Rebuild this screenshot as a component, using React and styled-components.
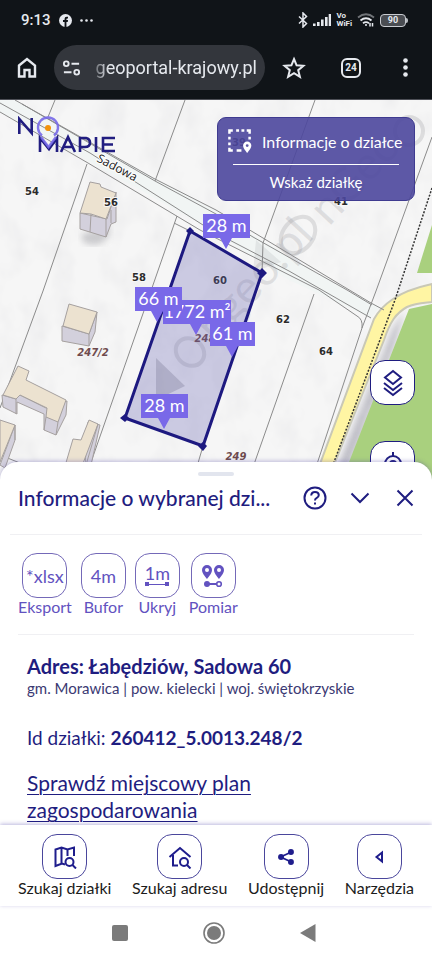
import React from 'react';
import styled, { createGlobalStyle } from 'styled-components';

const navy = '#1f1d80';
const violet = '#6252c0';

const GlobalStyle = createGlobalStyle`
  *, *::before, *::after { box-sizing: border-box; }
  body { margin: 0; background: #fff; font-family: Lato, "Open Sans", sans-serif; }
  button { font: inherit; color: inherit; background: none; border: 0; padding: 0; cursor: pointer; }
  svg { display: block; }
`;

const Page = styled.div`
  min-height: 100vh;
  display: flex;
  flex-direction: column;
  background: #fff;
`;

/* ---------- phone and browser bars ---------- */

const TopBars = styled.header`
  background: #101418;
  color: #e6e9ee;
  font-family: Roboto, sans-serif;
  border-bottom: 1px solid #4d4f56;
`;
const StatusBar = styled.div`
  display: flex;
  align-items: center;
  justify-content: space-between;
  height: 40px;
  padding: 0 24px 0 21px;
`;
const StatusGroup = styled.div`
  display: flex;
  align-items: center;
  gap: ${(p) => p.$gap}px;
`;
const Clock = styled.time`
  font-size: 15px;
  font-weight: 500;
`;
const VoWifi = styled.span`
  display: flex;
  flex-direction: column;
  font-size: 8px;
  line-height: 8px;
  font-weight: 700;
`;
const Battery = styled.span`
  display: flex;
  align-items: center;
  &::after {
    content: '';
    width: 2px;
    height: 5px;
    background: #b8bbc0;
    border-radius: 0 2px 2px 0;
  }
`;
const BatteryCell = styled.span`
  width: 26px;
  height: 13px;
  border: 1px solid #c9ccd1;
  border-radius: 4px;
  background: #4a4d52;
  font-size: 9px;
  line-height: 11px;
  font-weight: 700;
  text-align: center;
`;
const BrowserBar = styled.div`
  display: flex;
  align-items: center;
  height: 59px;
  padding: 0 8px 4px 16px;
`;
const BarButton = styled.button`
  display: grid;
  place-items: center;
  width: ${(p) => p.$width}px;
  height: 44px;
  flex: none;
`;
const AddressPill = styled.button`
  display: flex;
  align-items: center;
  flex: 1;
  min-width: 0;
  height: 45px;
  margin: 0 8px 0 16px;
  padding: 0 8px;
  border-radius: 23px;
  background: #33363c;
  gap: 8px;
`;
const Url = styled.span`
  flex: 1;
  min-width: 0;
  white-space: nowrap;
  text-align: right;
  font-size: 18px;
  line-height: 28px;
  mask-image: linear-gradient(90deg, transparent, #000 20px);
`;
const TabCount = styled.span`
  display: grid;
  place-items: center;
  width: 20px;
  height: 20px;
  border: 2px solid #e6e9ee;
  border-radius: 6px;
  font-size: 10px;
  font-weight: 700;
`;

/* ---------- map ---------- */

const MapArea = styled.main`
  position: relative;
  flex: 1 0 300px;
  overflow: hidden;
  background: #f4f4f4;
`;
const MapCanvas = styled.svg`
  position: absolute;
  inset: 0;
  width: 100%;
  height: 100%;
`;
const Logo = styled.a`
  position: absolute;
  left: 17px;
  top: 16px;
`;
const InfoPanel = styled.section`
  position: absolute;
  top: 17px;
  right: 17px;
  width: 198px;
  padding: 11px 15px 8px;
  border: 1px solid #3f3b90;
  border-radius: 9px;
  background: rgba(77, 71, 157, 0.9);
  color: #fff;
  font-size: 15px;
`;
const PanelTitle = styled.div`
  display: flex;
  align-items: center;
  gap: 10px;
  height: 24px;
  margin: 0 -7px 11px -5px;
  white-space: nowrap;
  font-size: 16px;
`;
const PanelAction = styled.button`
  display: block;
  width: 100%;
  padding-top: 8px;
  border-top: 1px solid #fff;
  line-height: 19px;
`;
const MapTools = styled.div`
  position: absolute;
  top: 260px;
  right: 17px;
  display: flex;
  flex-direction: column;
  gap: 36px;
`;

const Tile = styled.span`
  display: grid;
  place-items: center;
  width: 45px;
  height: 45px;
  border: 1px solid ${(p) => p.$line};
  border-radius: 15px;
  background: #fff;
  font-size: 18px;
`;
const NavTile = styled(Tile).attrs({ $line: '#4a469c' })`
  color: #1f1d8c;
`;
const TileButton = styled.button`
  display: flex;
  flex-direction: column;
  align-items: center;
  color: ${(p) => p.$color};
  font-size: 16px;
  line-height: 18px;
  white-space: nowrap;
`;

/* ---------- sheet ---------- */

const Sheet = styled.section`
  position: relative;
  margin-top: -18px;
  padding-top: 10px;
  border-radius: 18px 18px 0 0;
  background: #fff;
  box-shadow: 0 -1px 4px rgba(80, 70, 160, 0.35);
  color: ${navy};
`;
const Handle = styled.div`
  width: 36px;
  height: 4px;
  margin: 0 auto;
  border-radius: 2px;
  background: #e2e5ee;
`;
const SheetHeader = styled.div`
  display: flex;
  align-items: center;
  margin: 0 10px;
  padding: 0 0 14px 8px;
  border-bottom: 1px solid #f0f0f3;
`;
const SheetTitle = styled.h1`
  flex: 1;
  min-width: 0;
  overflow: hidden;
  margin: 0;
  white-space: nowrap;
  font-size: 21px;
  line-height: 44px;
  font-weight: 500;
`;
const HeaderButton = styled.button`
  display: grid;
  place-items: center;
  flex: none;
  width: 45px;
  height: 44px;
  &:last-child { margin-right: -5px; }
`;
const Actions = styled.div`
  display: flex;
  gap: 9px;
  margin: 0 18px;
  padding: 18px 0 18px;
  border-bottom: 1px solid #f0f0f3;
`;
const Details = styled.div`
  padding: 18px 27px 0;
  font-size: 19px;
  line-height: 27px;
`;
const Address = styled.h2`
  margin: 0;
  font-size: 20px;
  line-height: 26px;
  font-weight: 700;
`;
const Region = styled.p`
  margin: 0 0 26px;
  font-size: 15px;
  line-height: 19px;
  white-space: nowrap;
  color: #3b3973;
`;
const ParcelId = styled.p`
  margin: 0 0 18px;
`;
const PlanLink = styled.a`
  display: block;
  max-width: 250px;
  color: ${navy};
  font-size: 21px;
  text-underline-offset: 3px;
  text-decoration-thickness: 1px;
  padding-bottom: 2px;
`;

/* ---------- bottom ---------- */

const BottomNav = styled.nav`
  position: relative;
  display: flex;
  justify-content: space-between;
  padding: 9px 18px 9px;
  background: #fff;
  box-shadow: 0 -1px 4px rgba(60, 50, 160, 0.35);
`;
const SystemNav = styled.div`
  display: grid;
  grid-template-columns: repeat(3, 94px);
  justify-content: center;
  justify-items: center;
  align-items: center;
  height: 54px;
  padding-right: 4px;
  color: #7b7b7b;
`;
const SystemButton = styled.button`
  display: grid;
  place-items: center;
  width: 48px;
  height: 44px;
`;

/* ---------- map drawing ---------- */

function Callout({ x, y, w, tip, children }) {
  return (
    <g>
      <path d={`M${x} ${y}h${w}v24H${tip + 6}L${tip} ${y + 35}L${tip - 6} ${y + 24}H${x}z`} fill="#7968e8" />
      <text x={x + w / 2} y={y + 18} fill="#fff" fontSize="18" textAnchor="middle" fontFamily="Lato, sans-serif">
        {children}
      </text>
    </g>
  );
}

function Building({ wall, roof, lines }) {
  return (
    <g stroke="#a5a09f" strokeWidth="1" strokeLinejoin="round">
      <path d={wall} fill="#d3d0dc" />
      <path d={roof} fill="#ece2d0" />
      <path d={lines} fill="none" />
    </g>
  );
}

const houseNumbers = [
  ['54', 32, 195], ['56', 111, 206], ['58', 139, 281], ['60', 220, 284],
  ['62', 283, 323], ['64', 326, 355], ['39', 239, 146], ['41', 341, 205],
];
const parcelNumbers = [['247/2', 93, 356], ['248', 205, 342], ['249', 236, 460]];

function ParcelMap() {
  return (
    <MapCanvas viewBox="0 100 432 380" preserveAspectRatio="xMidYMin slice" role="img" aria-label="Mapa działki">
      <defs>
        <filter id="ground" x="0" y="0" width="100%" height="100%">
          <feTurbulence type="fractalNoise" baseFrequency="0.04 0.03" numOctaves="3" seed="4" />
          <feColorMatrix values="0 0 0 0 0.75  0 0 0 0 0.75  0 0 0 0 0.77  0.8 0 0 0 -0.33" />
        </filter>
        <filter id="soft"><feGaussianBlur stdDeviation="3" /></filter>
      </defs>
      <rect y="100" width="432" height="380" fill="#f6f6f6" />
      <path d="M110 226c2 14-12 24-27 16l-2-8z" fill="#b9b9bd" filter="url(#soft)" opacity=".7" />
      <path d="M404 312C395 350 372 410 348 470h-12L392 330z" fill="#a9a8b4" filter="url(#soft)" opacity=".7" />
      <rect y="100" width="432" height="380" filter="url(#ground)" />

      <path d="M0 103V100H15L153 178L216 211L253 235L346 290L380 307L371 318L289 280L203 225L0 112z" fill="#f1f5f4" />
      <path d="M432 225L417 273H432zM409 309L432 304V480H342z" fill="#a9d07e" />
      <path d="M432 284C414 288 403 292 393 299C384 305 379 310 374 319L314 480H328L384 340C390 322 396 313 407 307C416 303 424 303 432 302z" fill="#fff5a3" stroke="#c9c8b5" strokeWidth="2" />

      <g fill="none" stroke="#8b8b8b" strokeWidth="1">
        <path d="M15 100L153 178L216 210L253 232L346 288L371 303L384 310" />
        <path d="M22 104L155 181L216 214L253 237L347 290L372 305" />
        <path d="M0 103L90 153L203 225L216 233L289 271L371 318" />
        <path d="M0 112L88 163L200 230L319 290L357 316Q363 319 362 328" />
        <path d="M55 100L48 117M185 100L155 181M87 164L43 291L0 408" />
        <path d="M177 216L153 285L90 465M174 223L190 231" />
        <path d="M315 100L263 243L262 273" />
        <path d="M432 137L376 291L362 328L315 470" />
        <path d="M314 294L252 470M203 446L196 470M0 455L20 463" />
      </g>
      <path d="M432 188L395 300L331 470" fill="none" stroke="#333" strokeWidth="1.5" strokeDasharray="2 1.5" />

      <g fill="none" stroke="#8d8d93" strokeOpacity=".24" strokeWidth="4">
        <ellipse cx="190" cy="352" rx="15" ry="13" transform="rotate(40 190 352)" />
        <ellipse cx="298" cy="235" rx="15" ry="20" transform="rotate(40 298 235)" />
        <ellipse cx="409" cy="131" rx="14" ry="14" />
      </g>
      <g fill="#8d8d93" fillOpacity=".22" fontFamily="Lato, sans-serif" fontSize="46">
        <text transform="translate(215 344) rotate(-47)">ngeo.pl</text>
        <text transform="translate(329 227) rotate(-47)">nGeo</text>
      </g>
      <path d="M156 358L185 386L156 400z" fill="#75757c" fillOpacity=".3" />
      <path d="M256 240l25 22-28 10z" fill="#75757c" fillOpacity=".12" />

      <Building
        wall="M80 213L107 219L116 192V222L111 224L106 237L80 229z"
        roof="M90 182L100 184L101 187L116 193L106 219L91 214L80 213z"
        lines="M91 214L90 232M106 219V237M111 210V223"
      />
      <Building
        wall="M62 326L89 334L97 312L95 332L89 346L62 341z"
        roof="M69 304L97 312L89 334L63 326z"
        lines="M89 334V346"
      />
      <Building
        wall="M2 395L16 399L20 395L46 408L67 401L66 415L56 435L44 430V414L17 402V414L3 407z"
        roof="M18 366L29 371L26 380L66 400L58 422L46 417L47 408L20 395L16 399L3 395z"
        lines="M16 399V414M58 422L56 435M46 417L44 430"
      />
      <Building
        wall="M88 422L100 425L91 465H85z"
        roof="M89 420L98 424L82 466H65L73 439L81 440z"
        lines="M98 424L86 465"
      />
      <Building wall="M0 465L15 425V440L5 468z" roof="M0 420L15 425L0 462z" lines="M15 425V440" />

      <text transform="translate(96 161) rotate(28)" fontFamily="Open Sans, sans-serif" fontSize="12" fill="#222" stroke="#fff" strokeWidth="2" paintOrder="stroke">
        Sadowa
      </text>
      <g fontFamily="DejaVu Sans, sans-serif" fontWeight="700" fontSize="10" textAnchor="middle" paintOrder="stroke" stroke="#f8f8f8" strokeWidth="2">
        {houseNumbers.map(([label, x, y]) => <text key={label} x={x} y={y} fill="#2b2b2b">{label}</text>)}
      </g>
      <g fontFamily="DejaVu Sans, sans-serif" fontWeight="700" fontStyle="italic" fontSize="10" textAnchor="middle" fill="#6e4a4d">
        {parcelNumbers.map(([label, x, y]) => <text key={label} x={x} y={y}>{label}</text>)}
      </g>

      <path d="M190 231L262 273L203 446L125 418z" fill="#6764b4" fillOpacity=".3" stroke="#1d1980" strokeWidth="3" />
      <path d="M190 227l4 4-4 4-4-4zM262 268l5 5-5 5-5-5zM203 442l4 4-4 5-5-5zM125 414l4 4-4 4-5-4z" fill="#1d1980" />

      <Callout x={203} y={214} w={47} tip={226}>28 m</Callout>
      <Callout x={163} y={300} w={68} tip={196}>1772 m²</Callout>
      <Callout x={135} y={287} w={47} tip={157}>66 m</Callout>
      <Callout x={210} y={322} w={45} tip={232}>61 m</Callout>
      <Callout x={141} y={394} w={47} tip={164}>28 m</Callout>
    </MapCanvas>
  );
}

/* ---------- icons ---------- */

const Icon = styled.svg.attrs({ 'aria-hidden': true })`
  width: ${(p) => p.$w || 24}px;
  height: ${(p) => p.$h || p.$w || 24}px;
  flex: none;
  fill: ${(p) => (p.$solid ? 'currentColor' : 'none')};
  stroke: ${(p) => (p.$solid ? 'none' : 'currentColor')};
  stroke-width: ${(p) => p.$stroke || 2};
`;

const LogoMark = () => (
  <svg width="100" height="38" viewBox="0 0 100 38" role="img" aria-label="No mapie">
    <g fill="none" stroke="#211d80" strokeWidth="2.6">
      <path d="M2.300 18V3L14.700 17V2" />
      <path d="M23 36V22L32 33L40 22V36M44 36L51 21L58 36M47 31H55M63 36V22H69Q73 23 73 26.500Q73 31 68 31H63M79 21V36M98 22H86V35H98M86 28.500H96" />
    </g>
    <path d="M25 19.500A10 10 0 1 1 37 19.500M24 21L31.500 31L39 21" fill="none" stroke="#7769e8" strokeWidth="2.400" opacity=".9" />
    <circle cx="31" cy="12" r="3" fill="#f3930c" />
  </svg>
);

const PinPairIcon = () => (
  <Icon viewBox="0 0 24 24" $solid>
    <path fillRule="evenodd" d="M6 1a5 5 0 0 0-5 5c0 3.500 5 9 5 9s5-5.500 5-9a5 5 0 0 0-5-5zm0 3a2 2 0 1 1 0 4 2 2 0 0 1 0-4zM18 1a5 5 0 0 0-5 5c0 3.500 5 9 5 9s5-5.500 5-9a5 5 0 0 0-5-5zm0 3a2 2 0 1 1 0 4 2 2 0 0 1 0-4z" />
    <path d="M5 19h11v2H5z" />
    <circle cx="6" cy="20" r="3" />
    <circle cx="18" cy="20" r="2.300" fill="#fff" stroke="currentColor" strokeWidth="1.600" />
  </Icon>
);

const RulerLabel = styled.span`
  display: flex;
  flex-direction: column;
  align-items: center;
  line-height: 18px;
`;

const actions = [
  ['Eksport', '*xlsx'],
  ['Bufor', '4m'],
  ['Ukryj', (
    <RulerLabel key="m">1m
      <Icon viewBox="0 0 24 5" $w={24} $h={5} $solid><path d="M0 0h4v2h16V0h4v4h-4V3H4v1H0z" /></Icon>
    </RulerLabel>
  )],
  ['Pomiar', <PinPairIcon key="p" />],
];

const navItems = [
  ['Szukaj działki', (
    <Icon key="i" viewBox="0 0 24 24" $w={24}>
      <path d="M12 19.500L9 18.500L2.500 21V4.500L8.500 2.500L14.500 4.500L21 2.500V11M8.500 2.500V18M14.500 4.500V11" />
      <circle cx="16.500" cy="17" r="4" /><path d="M19.500 20L23 23.500" />
    </Icon>
  )],
  ['Szukaj adresu', (
    <Icon key="i" viewBox="0 0 24 24" $w={24}>
      <path d="M1.500 12L12 3L22.500 12M5 10V20.500H10" />
      <circle cx="16" cy="17" r="4" /><path d="M19 20L22.500 23.500" />
    </Icon>
  )],
  ['Udostępnij', (
    <Icon key="i" viewBox="0 0 20 20" $w={18}>
      <path d="M16 4.500L4 10L16 15.500" />
      <g fill="currentColor" stroke="none"><circle cx="15.500" cy="4.500" r="3.300" /><circle cx="4.500" cy="10" r="3.300" /><circle cx="15.500" cy="15.500" r="3.300" /></g>
    </Icon>
  )],
  ['Narzędzia', (
    <Icon key="i" viewBox="0 0 12 14" $w={12} $h={14}><path d="M9 2.500V11.500L3.500 7z" /></Icon>
  )],
];

const AreaIcon = () => (
  <Icon viewBox="0 0 25 25" $w={24} $stroke={2.6}>
    <path d="M1.500 5V1.500H5M8.500 1.500H11.500M14 1.500H17M19.500 1.500H22.500V5M22.500 8V11M1.500 8V11M1.500 14V17M1.500 19.500V22.500H5M9 22.500H14" />
    <path fillRule="evenodd" stroke="none" fill="currentColor" d="M20 13a4.300 4.300 0 0 0-4.300 4.300C15.700 20.500 20 25 20 25s4.300-4.500 4.300-7.700A4.300 4.300 0 0 0 20 13zm0 2.800a1.500 1.500 0 1 1 0 3 1.500 1.500 0 0 1 0-3z" />
  </Icon>
);

export default function App() {
  return (
    <Page>
      <GlobalStyle />
      <TopBars>
        <StatusBar>
          <StatusGroup $gap={8}>
            <Clock>9:13</Clock>
            <Icon viewBox="0 0 14 14" $w={13} $solid>
              <circle cx="7" cy="7" r="7" />
              <path d="M6 14V8.500H4.300V6.500H6V5.200Q6 3 8.300 3H9.700V4.800H8.800Q8 4.800 8 5.700V6.500H9.700L9.400 8.500H8V14z" fill="#101418" />
            </Icon>
            <Icon viewBox="0 0 13 3" $w={13} $h={3} $solid><circle cx="1.500" cy="1.500" r="1.300" /><circle cx="6.500" cy="1.500" r="1.300" /><circle cx="11.500" cy="1.500" r="1.300" /></Icon>
          </StatusGroup>
          <StatusGroup $gap={5}>
            <Icon viewBox="0 0 10 16" $w={10} $h={16} $stroke={1.5}><path d="M1 4.500L8.500 11.500L5 15V1L8.500 4.500L1 11.500" /></Icon>
            <Icon viewBox="0 0 18 12" $w={18} $h={12} $solid><path d="M0 9.500h2.600V12H0zM4 8h2.600v4H4zM8 5.500h2.600V12H8zM12 3h2.600v9h-2.600zM15.700 0H18v12h-2.300z" /></Icon>
            <VoWifi><span>Vo</span><span>WiFi</span></VoWifi>
            <Icon viewBox="0 0 18 14" $w={18} $h={14} $stroke={1.8}>
              <path d="M1 4.500Q9-2 17 4.500" opacity=".45" /><path d="M3.500 7.500Q9 3 14.500 7.500M6 10.300Q9 8 12 10.300" />
              <path d="M9 11v2M13 10v3.500M15.500 10v3.500" strokeWidth="1.500" />
            </Icon>
            <Battery><BatteryCell>90</BatteryCell></Battery>
          </StatusGroup>
        </StatusBar>
        <BrowserBar>
          <BarButton $width={22} aria-label="Strona główna">
            <Icon viewBox="0 0 20 21" $w={20} $h={21} $stroke={2.4}><path d="M2 8.500L10 2L18 8.500V19.500H12.500V13H7.500V19.500H2z" /></Icon>
          </BarButton>
          <AddressPill>
            <Icon viewBox="0 0 20 16" $w={19} $h={16}><circle cx="4.500" cy="3.500" r="2.500" /><path d="M10 3.500H18M2 12.500H10" /><circle cx="15.500" cy="12.500" r="2.500" /></Icon>
            <Url>geoportal-krajowy.pl</Url>
          </AddressPill>
          <BarButton $width={42} aria-label="Dodaj do zakładek">
            <Icon viewBox="0 0 24 24" $w={24}><path d="M12 3L14.600 9.300L21.400 9.800L16.200 14.200L17.900 20.800L12 17.200L6.100 20.800L7.800 14.200L2.600 9.800L9.400 9.300z" /></Icon>
          </BarButton>
          <BarButton $width={72} aria-label="Karty"><TabCount>24</TabCount></BarButton>
          <BarButton $width={37} aria-label="Więcej">
            <Icon viewBox="0 0 5 19" $w={5} $h={19} $solid><circle cx="2.500" cy="2.500" r="2.300" /><circle cx="2.500" cy="9.500" r="2.300" /><circle cx="2.500" cy="16.500" r="2.300" /></Icon>
          </BarButton>
        </BrowserBar>
      </TopBars>

      <MapArea>
        <ParcelMap />
        <Logo href="#"><LogoMark /></Logo>
        <InfoPanel>
          <PanelTitle><AreaIcon />Informacje o działce</PanelTitle>
          <PanelAction>Wskaż działkę</PanelAction>
        </InfoPanel>
        <MapTools>
          <TileButton $color={navy} aria-label="Warstwy">
            <Tile $line={navy}>
              <Icon viewBox="0 0 22 28" $w={22} $h={28}><path d="M11 2L19 8.500L11 15L3 8.500zM2 14L11 21L20 14M2 19L11 26L20 19" /></Icon>
            </Tile>
          </TileButton>
          <TileButton $color={navy} aria-label="Moja lokalizacja">
            <Tile $line={navy}>
              <Icon viewBox="0 0 24 24" $w={24}><circle cx="12" cy="12" r="8" /><circle cx="12" cy="12" r="4" fill="currentColor" stroke="none" /><path d="M12 0v4M12 20v4M0 12h4M20 12h4" /></Icon>
            </Tile>
          </TileButton>
        </MapTools>
      </MapArea>

      <Sheet>
        <Handle />
        <SheetHeader>
          <SheetTitle>Informacje o wybranej dzi...</SheetTitle>
          <HeaderButton aria-label="Pomoc">
            <Icon viewBox="0 0 24 24" $w={24}><circle cx="12" cy="12" r="10.500" /><path d="M8.200 9.500Q8.500 6 12 6Q15.600 6 15.800 9Q15.800 11 13.500 12.200Q12 13 12 14.500M12 16.500V18.500" /></Icon>
          </HeaderButton>
          <HeaderButton aria-label="Zwiń">
            <Icon viewBox="0 0 20 12" $w={20} $h={12}><path d="M1.500 1.500L10 10L18.500 1.500" /></Icon>
          </HeaderButton>
          <HeaderButton aria-label="Zamknij">
            <Icon viewBox="0 0 18 18" $w={18}><path d="M1.500 1.500L16.500 16.500M16.500 1.500L1.500 16.500" /></Icon>
          </HeaderButton>
        </SheetHeader>
        <Actions>
          {actions.map(([label, mark]) => (
            <TileButton key={label} $color={violet}>
              <Tile $line="#7469b8">{mark}</Tile>
              {label}
            </TileButton>
          ))}
        </Actions>
        <Details>
          <Address>Adres: Łabędziów, Sadowa 60</Address>
          <Region>gm. Morawica | pow. kielecki | woj. świętokrzyskie</Region>
          <ParcelId>Id działki: <strong>260412_5.0013.248/2</strong></ParcelId>
          <PlanLink href="#">Sprawdź miejscowy plan zagospodarowania</PlanLink>
        </Details>
      </Sheet>

      <BottomNav>
        {navItems.map(([label, icon]) => (
          <TileButton key={label} $color="#1c1c1c">
            <NavTile>{icon}</NavTile>
            {label}
          </TileButton>
        ))}
      </BottomNav>
      <SystemNav>
        <SystemButton aria-label="Ostatnie aplikacje">
          <Icon viewBox="0 0 16 16" $w={16} $solid><rect width="16" height="16" rx="2" /></Icon>
        </SystemButton>
        <SystemButton aria-label="Ekran główny">
          <Icon viewBox="0 0 22 22" $w={22} $stroke={1.6}><circle cx="11" cy="11" r="10" /><circle cx="11" cy="11" r="7" fill="currentColor" stroke="none" /></Icon>
        </SystemButton>
        <SystemButton aria-label="Wstecz">
          <Icon viewBox="0 0 16 18" $w={16} $h={18} $solid><path d="M15.500 0V18L0 9z" /></Icon>
        </SystemButton>
      </SystemNav>
    </Page>
  );
}
